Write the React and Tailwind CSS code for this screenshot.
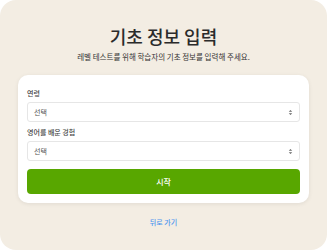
const font = { fontFamily: '"Noto Sans CJK KR", "Noto Sans", sans-serif' }

function SelectBox({ placeholder }) {
  return (
    <div className="mt-[4px] flex h-[20px] items-center justify-between rounded-[3px] border border-[#e6e6e6] bg-white pl-[6px] pr-[6px]">
      <span className="text-[7px] leading-[10px] text-[#555]">{placeholder}</span>
      <svg width="5" height="7" viewBox="0 0 5 7" className="text-[#666]">
        <path d="M0.8 2.8 L2.5 1 L4.2 2.8 Z" fill="currentColor" />
        <path d="M0.8 4.2 L2.5 6 L4.2 4.2 Z" fill="currentColor" />
      </svg>
    </div>
  )
}

export default function App() {
  return (
    <div className="h-[250px] w-[327px] bg-white" style={font}>
      <div className="flex h-full w-full flex-col items-center rounded-2xl bg-[#f3ede3] pt-[23px]">
        <h1 className="text-[18px] font-medium leading-[26px] text-[#2b2b2b]">기초 정보 입력</h1>
        <p className="mt-[3px] text-[7.5px] leading-[10px] text-[#333]">
          레벨 테스트를 위해 학습자의 기초 정보를 입력해 주세요.
        </p>

        <div className="mt-[13px] w-[291px] rounded-[10px] bg-white px-[9px] pb-[9px] pt-[13px] shadow-[0_1px_4px_rgba(0,0,0,0.08)]">
          <label className="block text-[7px] font-medium leading-[10px] text-[#444]">연령</label>
          <SelectBox placeholder="선택" />

          <label className="mt-[5px] block text-[7px] font-medium leading-[10px] text-[#444]">영어를 배운 경험</label>
          <SelectBox placeholder="선택" />

          <button className="mt-[8px] flex h-[25px] w-full items-center justify-center rounded-[4px] bg-[#58a700] text-[8px] font-medium text-white">
            시작
          </button>
        </div>

        <a className="mt-[14px] text-[7px] font-medium leading-[10px] text-[#4f95ee]">뒤로 가기</a>
      </div>
    </div>
  )
}
